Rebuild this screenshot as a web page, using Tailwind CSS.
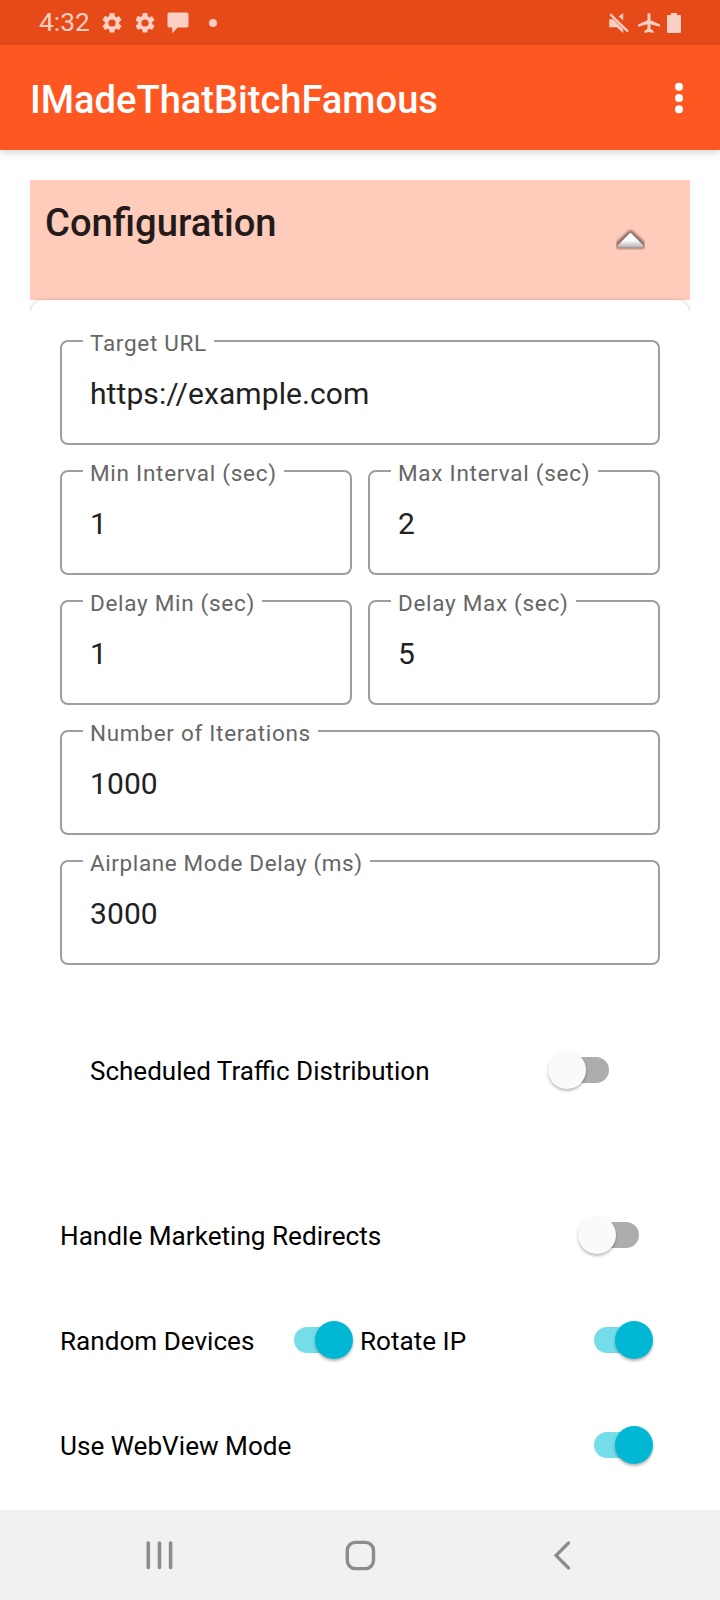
<!DOCTYPE html>
<html lang="en">
<head>
<meta charset="utf-8">
<meta name="viewport" content="width=720">
<title>IMadeThatBitchFamous</title>
<script src="https://cdn.jsdelivr.net/npm/@tailwindcss/browser@4"></script>
</head>
<body class="flex h-[1600px] w-[720px] flex-col overflow-hidden bg-white font-[Roboto,sans-serif] text-black">

  <!-- Status bar -->
  <div class="flex h-[45px] shrink-0 items-center bg-[#e64a19] pr-[39px] pl-[39px] text-[#fbcfc3]">
    <span class="w-[61px] text-[26.300px] leading-[45px]">4:32</span>
    <svg class="size-6" viewBox="0 0 24 24" fill="currentColor"><path d="M19.14 12.94c.04-.3.06-.61.06-.94s-.02-.64-.07-.94l2.03-1.58a.49.49 0 0 0 .12-.61l-1.92-3.32a.49.49 0 0 0-.59-.22l-2.39.96a7 7 0 0 0-1.62-.94l-.36-2.54A.48.48 0 0 0 13.92 2h-3.84a.48.48 0 0 0-.47.41l-.36 2.54c-.59.24-1.13.57-1.62.94l-2.39-.96a.48.48 0 0 0-.59.22L2.74 8.87a.48.48 0 0 0 .12.61l2.03 1.58c-.05.3-.09.63-.09.94s.02.64.07.94l-2.03 1.58a.49.49 0 0 0-.12.61l1.92 3.32c.12.22.37.29.59.22l2.39-.96c.5.38 1.03.7 1.62.94l.36 2.54c.05.24.24.41.48.41h3.84c.24 0 .44-.17.47-.41l.36-2.54c.59-.24 1.13-.56 1.62-.94l2.39.96c.22.08.47 0 .59-.22l1.92-3.32a.48.48 0 0 0-.12-.61zM12 15.6a3.6 3.6 0 1 1 0-7.2 3.6 3.6 0 0 1 0 7.2"/></svg>
    <svg class="ml-[9px] size-6" viewBox="0 0 24 24" fill="currentColor"><path d="M19.14 12.94c.04-.3.06-.61.06-.94s-.02-.64-.07-.94l2.03-1.58a.49.49 0 0 0 .12-.61l-1.92-3.32a.49.49 0 0 0-.59-.22l-2.39.96a7 7 0 0 0-1.62-.94l-.36-2.54A.48.48 0 0 0 13.92 2h-3.84a.48.48 0 0 0-.47.41l-.36 2.54c-.59.24-1.13.57-1.62.94l-2.39-.96a.48.48 0 0 0-.59.22L2.74 8.87a.48.48 0 0 0 .12.61l2.03 1.58c-.05.3-.09.63-.09.94s.02.64.07.94l-2.03 1.58a.49.49 0 0 0-.12.61l1.92 3.32c.12.22.37.29.59.22l2.39-.96c.5.38 1.03.7 1.62.94l.36 2.54c.05.24.24.41.48.41h3.84c.24 0 .44-.17.47-.41l.36-2.54c.59-.24 1.13-.56 1.62-.94l2.39.96c.22.08.47 0 .59-.22l1.92-3.32a.48.48 0 0 0-.12-.61zM12 15.6a3.6 3.6 0 1 1 0-7.2 3.6 3.6 0 0 1 0 7.2"/></svg>
    <svg class="ml-2.5 h-[23px] w-[22px]" viewBox="0 0 22 23" fill="currentColor"><path d="M2.500 1.500h17.200a1.800 1.800 0 0 1 1.800 1.800v11.400a1.800 1.800 0 0 1-1.800 1.800H10.500L5.200 22.500V16.500H2.500A1.800 1.800 0 0 1 .5 14.700V3.300A1.800 1.800 0 0 1 2.500 1.500"/></svg>
    <span class="ml-5 size-2 rounded-full bg-[#fbcfc3]"></span>
    <svg class="ml-auto h-[22px] w-[22px]" viewBox="0 0 22 22" fill="currentColor"><path d="M15.200 1v7.200L10.600 4.600z"/><path d="M1.200 7.200h4L15.200 17.200V21L8.800 15.200H1.200z"/><path d="M2.200 2.100 20 19.600" stroke="currentColor" stroke-width="2.200" fill="none"/></svg>
    <svg class="ml-[7px] h-[22px] w-6" viewBox="0 0 24 22" fill="currentColor"><path d="M12 1c.9 0 1.500.8 1.500 1.800v5.400L23 12.600v2.200l-9.500-2.600v4.600l3 2.300V21L12 20l-4.500 1v-1.900l3-2.300v-4.600L1 14.800v-2.200l9.500-4.400V2.800C10.500 1.800 11.100 1 12 1"/></svg>
    <svg class="ml-[6px] h-[22px] w-[14px]" viewBox="0 0 14 22" fill="currentColor"><path d="M4 1h6v2h2.800A1.200 1.200 0 0 1 14 4.200v15.600a1.200 1.200 0 0 1-1.200 1.200H1.200A1.200 1.200 0 0 1 0 19.800V4.200A1.200 1.200 0 0 1 1.200 3H4z"/></svg>
  </div>

  <!-- App bar -->
  <header class="z-10 flex h-[105px] shrink-0 items-center justify-between bg-[#ff5722] pr-[37.500px] pl-[30px] shadow-[0_3px_7px_rgba(0,0,0,0.150)]">
    <h1 class="pt-1 text-[38.100px] leading-[44px] font-medium text-white">IMadeThatBitchFamous</h1>
    <svg class="h-8 w-2" viewBox="0 0 8 32" fill="#fff"><circle cx="4" cy="4.800" r="4"/><circle cx="4" cy="16" r="4"/><circle cx="4" cy="27.200" r="4"/></svg>
  </header>

  <main class="flex grow flex-col overflow-hidden px-[30px] pt-[30px]">
    <div class="flex grow flex-col overflow-hidden">
      <!-- Section header -->
      <div class="flex h-[120px] shrink-0 items-start justify-between bg-[#ffccbc] pr-[45px] pl-[15px]">
        <h2 class="pt-[21px] text-[38.150px] leading-[44px] font-medium text-[#221b19]">Configuration</h2>
        <svg class="mt-[49px] h-[21px] w-[29px]" viewBox="0 0 29 21">
          <defs>
            <linearGradient id="arrow" x1="0" y1="0" x2="0" y2="1"><stop offset="0.500" stop-color="#fff"/><stop offset="1" stop-color="#b0b0b0"/></linearGradient>
            <filter id="soft" x="-30%" y="-40%" width="160%" height="180%"><feGaussianBlur stdDeviation="1.800"/></filter>
          </defs>
          <path d="M14.500 0.500 28.500 13v6.500h-28V13z" fill="#53352d" fill-opacity="0.700" filter="url(#soft)"/>
          <path d="M14.500 3.500 27 16v2.500H2V16z" fill="url(#arrow)"/>
        </svg>
      </div>

      <!-- Card -->
      <section class="flex grow flex-col rounded-t-[15px] bg-white px-[30px] pt-10 shadow-[0_1px_5px_rgba(0,0,0,0.300)]">
        <div class="grid grid-cols-2 gap-x-4 gap-y-[25px] text-[30px] tracking-[0.09px] text-[#212121]">
          <div class="relative col-span-2 flex h-[105px] items-center rounded-[8px] border-2 border-[#9e9e9e] pt-[2px] pl-7">
            <label class="absolute -top-3 left-[21px] bg-white pr-[7px] pl-[7px] text-[22.500px] leading-[26px] tracking-[0.7px] text-[#666]">Target URL</label>https://example.com
          </div>
          <div class="relative flex h-[105px] items-center rounded-[8px] border-2 border-[#9e9e9e] pt-[2px] pl-7">
            <label class="absolute -top-3 left-[21px] bg-white pr-[7px] pl-[7px] text-[22.500px] leading-[26px] tracking-[0.73px] text-[#666]">Min Interval (sec)</label>1
          </div>
          <div class="relative flex h-[105px] items-center rounded-[8px] border-2 border-[#9e9e9e] pt-[2px] pl-7">
            <label class="absolute -top-3 left-[21px] bg-white pr-2 pl-[7px] text-[22.500px] leading-[26px] tracking-[0.73px] text-[#666]">Max Interval (sec)</label>2
          </div>
          <div class="relative flex h-[105px] items-center rounded-[8px] border-2 border-[#9e9e9e] pt-[2px] pl-7">
            <label class="absolute -top-3 left-[21px] bg-white pr-[7px] pl-[7px] text-[22.500px] leading-[26px] tracking-[0.7px] text-[#666]">Delay Min (sec)</label>1
          </div>
          <div class="relative flex h-[105px] items-center rounded-[8px] border-2 border-[#9e9e9e] pt-[2px] pl-7">
            <label class="absolute -top-3 left-[21px] bg-white pr-2 pl-[7px] text-[22.500px] leading-[26px] tracking-[0.7px] text-[#666]">Delay Max (sec)</label>5
          </div>
          <div class="relative col-span-2 flex h-[105px] items-center rounded-[8px] border-2 border-[#9e9e9e] pt-[2px] pl-7">
            <label class="absolute -top-3 left-[21px] bg-white pr-[7px] pl-[7px] text-[22.500px] leading-[26px] tracking-[0.71px] text-[#666]">Number of Iterations</label>1000
          </div>
          <div class="relative col-span-2 flex h-[105px] items-center rounded-[8px] border-2 border-[#9e9e9e] pt-[2px] pl-7">
            <label class="absolute -top-3 left-[21px] bg-white pr-[7px] pl-[7px] text-[22.500px] leading-[26px] tracking-[0.61px] text-[#666]">Airplane Mode Delay (ms)</label>3000
          </div>
        </div>

        <!-- Switches -->
        <div class="mt-[60px] flex h-[90px] items-center justify-between pr-[36.500px] pl-[30px] text-[26px]">
          <span class="pt-[2px]">Scheduled Traffic Distribution</span>
          <div class="flex h-[38px] w-[75px] items-center">
            <div class="ml-[15px] flex h-[26px] w-[45px] items-center rounded-full bg-[#adadad]">
              <div class="-ml-[15.500px] size-[38px] shrink-0 rounded-full bg-[#fafafa] shadow-[0_2px_3px_rgba(0,0,0,0.270)]"></div>
            </div>
          </div>
        </div>

        <div class="mt-[67px] flex h-[105px] items-center justify-between pr-[6.500px] text-[26.150px]">
          <span class="pt-1">Handle Marketing Redirects</span>
          <div class="flex h-[38px] w-[75px] items-center">
            <div class="ml-[15px] flex h-[26px] w-[45px] items-center rounded-full bg-[#adadad]">
              <div class="-ml-[15.500px] size-[38px] shrink-0 rounded-full bg-[#fafafa] shadow-[0_2px_3px_rgba(0,0,0,0.270)]"></div>
            </div>
          </div>
        </div>

        <div class="grid h-[105px] grid-cols-2 items-center text-[26.100px]">
          <div class="flex items-center justify-between pr-[6.500px]">
            <span class="pt-1">Random Devices</span>
            <div class="flex h-[39px] w-[75px] items-center pt-px">
              <div class="ml-[15px] flex h-[26px] w-[45px] items-center rounded-full bg-[#75dce9]">
                <div class="ml-[21.500px] size-[38px] shrink-0 rounded-full bg-[#00b8d4] shadow-[0_2px_3px_rgba(0,0,0,0.300)]"></div>
              </div>
            </div>
          </div>
          <div class="flex items-center justify-between pr-[6.500px]">
            <span class="pt-1">Rotate IP</span>
            <div class="flex h-[39px] w-[75px] items-center pt-px">
              <div class="ml-[15px] flex h-[26px] w-[45px] items-center rounded-full bg-[#75dce9]">
                <div class="ml-[21.500px] size-[38px] shrink-0 rounded-full bg-[#00b8d4] shadow-[0_2px_3px_rgba(0,0,0,0.300)]"></div>
              </div>
            </div>
          </div>
        </div>

        <div class="flex h-[105px] items-center justify-between pr-[6.500px] text-[26.150px]">
          <span class="pt-1">Use WebView Mode</span>
          <div class="flex h-[38px] w-[75px] items-center">
            <div class="ml-[15px] flex h-[26px] w-[45px] items-center rounded-full bg-[#75dce9]">
              <div class="ml-[21.500px] size-[38px] shrink-0 rounded-full bg-[#00b8d4] shadow-[0_2px_3px_rgba(0,0,0,0.300)]"></div>
            </div>
          </div>
        </div>
      </section>
    </div>
  </main>

  <!-- Navigation bar -->
  <nav class="z-10 flex h-[90px] shrink-0 items-center bg-[#f1f1f1] pl-[145px]">
    <svg class="h-8 w-7" viewBox="0 0 28 32" fill="none" stroke="#8c8c8c" stroke-width="3.600" stroke-linecap="round"><path d="M3.300 4v24.500M14.500 4v24.500M25.600 4v24.500"/></svg>
    <svg class="ml-[171px] h-8 w-8" viewBox="0 0 32 32" fill="none" stroke="#8c8c8c" stroke-width="3.400"><rect x="3.300" y="3.400" width="26.200" height="26.200" rx="8"/></svg>
    <svg class="ml-[177px] h-8 w-[18px]" viewBox="0 0 18 32" fill="none" stroke="#8c8c8c" stroke-width="3.200" stroke-linecap="round"><path d="M15.500 4 3 16.500 15.500 29"/></svg>
  </nav>
</body>
</html>
